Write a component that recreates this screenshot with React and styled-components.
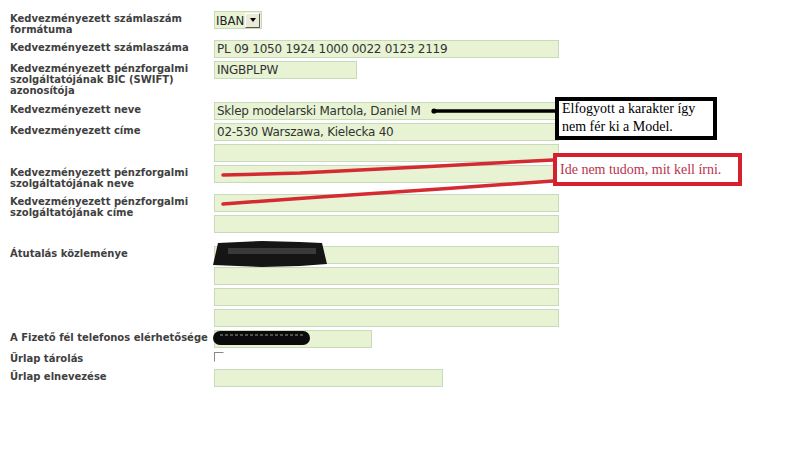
import React from 'react'
import styled, { createGlobalStyle } from 'styled-components';

const GlobalStyle = createGlobalStyle`
body{
  margin: 0;
  background: #fff;
}
`

function Field({ w, children }) {
  return <Input $w={w} readOnly value={children || ''} />
}

function App() {
  return (
    <Page>
      <GlobalStyle />
      <Form>
        <Row>
          <Label>Kedvezményezett számlaszám<br />formátuma</Label>
          <Fields>
            <Select>
              <span>IBAN</span>
              <SelectBtn><Arrow /></SelectBtn>
            </Select>
          </Fields>
        </Row>
        <Row $gap={5}>
          <Label>Kedvezményezett számlaszáma</Label>
          <Fields><Field w={345}>PL 09 1050 1924 1000 0022 0123 2119</Field></Fields>
        </Row>
        <Row $gap={3}>
          <Label>Kedvezményezett pénzforgalmi<br />szolgáltatójának BIC (SWIFT)<br />azonosítója</Label>
          <Fields><Field w={143}>INGBPLPW</Field></Fields>
        </Row>
        <Row $gap={6}>
          <Label>Kedvezményezett neve</Label>
          <Fields><Field w={345}>Sklep modelarski Martola, Daniel M</Field></Fields>
        </Row>
        <Row $gap={3}>
          <Label>Kedvezményezett címe</Label>
          <Fields>
            <Field w={345}>02-530 Warszawa, Kielecka 40</Field>
            <Field w={345} />
          </Fields>
        </Row>
        <Row $gap={3}>
          <Label>Kedvezményezett pénzforgalmi<br />szolgáltatójának neve</Label>
          <Fields><Field w={345} /></Fields>
        </Row>
        <Row $gap={5}>
          <Label>Kedvezményezett pénzforgalmi<br />szolgáltatójának címe</Label>
          <Fields>
            <Field w={345} />
            <Field w={345} />
          </Fields>
        </Row>
        <Row $gap={13}>
          <Label>Átutalás közleménye</Label>
          <Fields>
            <Field w={345} />
            <Field w={345} />
            <Field w={345} />
            <Field w={345} />
          </Fields>
        </Row>
        <Row $gap={3}>
          <Label>A Fizető fél telefonos elérhetősége</Label>
          <Fields><Field w={158} /></Fields>
        </Row>
        <Row $gap={3}>
          <Label>Űrlap tárolás</Label>
          <Fields><Check /></Fields>
        </Row>
        <Row $gap={5}>
          <Label>Űrlap elnevezése</Label>
          <Fields><Field w={229} /></Fields>
        </Row>
      </Form>

      <Marks width="800" height="471" viewBox="0 0 800 471">
        <path d="M218 243 L262 241 L300 242 L322 243 L327 264 L300 266 L262 267 L213 265 Z" fill="#151515" />
        <path d="M228 251 L316 251" stroke="#3a3a3a" strokeWidth="6" />
        <rect x="213" y="331" width="97" height="14" rx="7" fill="#0b0b0b" />
        <line x1="220" y1="335" x2="304" y2="335" stroke="#999" strokeWidth="1" strokeDasharray="3 2" />
        <line x1="434" y1="111" x2="556" y2="111" stroke="#000" strokeWidth="3.5" />
        <circle cx="434" cy="111" r="2.6" fill="#000" />
        <polyline points="223,175 300,173 420,167 553,160" fill="none" stroke="#d42a32" strokeWidth="3.5" strokeLinecap="round" />
        <polyline points="223,204 320,197 440,189 553,181" fill="none" stroke="#d42a32" strokeWidth="3.5" strokeLinecap="round" />
      </Marks>

      <Note $color="#000" $text="#000" $lh={18} $x={555} $y={97} $w={162} $h={43}>
        Elfogyott a karakter így<br />nem fér ki a Model.
      </Note>
      <Note $color="#d7202e" $text="#b8334c" $x={553} $y={153} $w={189} $h={33}>
        Ide nem tudom, mit kell írni.
      </Note>
    </Page>
  )
}

const Page = styled.div`
position: relative;
width: 800px;
height: 471px;
overflow: hidden;
padding: 11px 0 0 10px;
box-sizing: border-box;
background: #fff;
`
const Form = styled.div`
display: flex;
flex-direction: column;
`
const Row = styled.div`
display: grid;
grid-template-columns: 204px auto;
align-items: start;
margin-top: ${props => props.$gap || 0}px;
`
const Label = styled.div`
padding-top: 2px;
font-family: "DejaVu Sans", Verdana, sans-serif;
font-weight: bold;
font-size: 10px;
line-height: 11px;
color: #404040;
`
const Fields = styled.div`
display: flex;
flex-direction: column;
align-items: flex-start;
gap: 3px;
`
const Input = styled.input`
width: ${props => props.$w}px;
height: 18px;
box-sizing: border-box;
margin: 0;
padding: 0 2px;
border: 1px solid #c9d9bb;
background: #e7f3d3;
font-family: "DejaVu Sans", Verdana, sans-serif;
font-size: 12px;
letter-spacing: -0.25px;
color: #333;
outline: none;
`
const Select = styled.div`
display: flex;
align-items: center;
justify-content: space-between;
width: 48px;
height: 18px;
box-sizing: border-box;
border: 1px solid #c9d9bb;
background: #e7f3d3;
padding: 0 1px 0 1px;
font-family: "DejaVu Sans Condensed", "DejaVu Sans", sans-serif;
font-size: 13px;
color: #222;
`
const SelectBtn = styled.span`
display: flex;
align-items: center;
justify-content: center;
width: 15px;
height: 15px;
box-sizing: border-box;
background: #ece9d8;
border: 1px solid;
border-color: #fff #555 #555 #fff;
`
const Arrow = styled.span`
width: 0;
height: 0;
border-left: 3.5px solid transparent;
border-right: 3.5px solid transparent;
border-top: 4px solid #000;
`
const Check = styled.span`
display: block;
width: 10px;
height: 10px;
margin-top: 1px;
box-sizing: border-box;
border: 1px solid;
border-color: #888 #fff #fff #888;
background: #fff;
`
const Marks = styled.svg`
position: absolute;
left: 0;
top: 0;
pointer-events: none;
`
const Note = styled.div`
position: absolute;
left: ${props => props.$x}px;
top: ${props => props.$y}px;
width: ${props => props.$w}px;
height: ${props => props.$h}px;
box-sizing: border-box;
display: flex;
align-items: center;
border: 4px solid ${props => props.$color};
background: #fff;
padding: 0 0 1px 3px;
font-family: "Liberation Serif", "Times New Roman", serif;
font-size: 14px;
line-height: ${props => props.$lh || 15}px;
color: ${props => props.$text};
`

export default App
